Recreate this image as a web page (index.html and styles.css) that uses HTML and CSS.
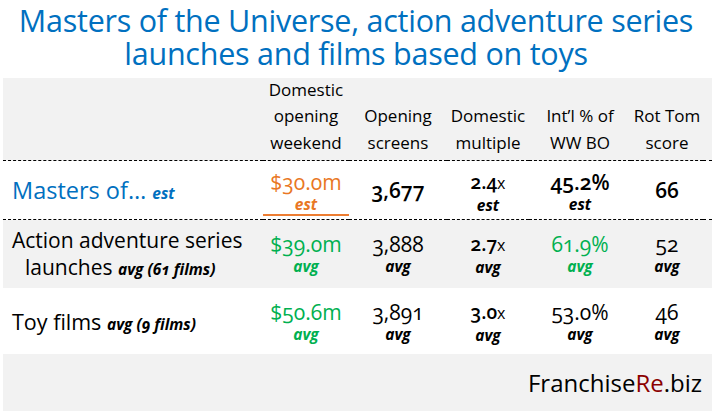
FILE: index.html
```html
<!DOCTYPE html>
<html>
<head>
<meta charset="utf-8">
<link rel="stylesheet" href="styles.css">
</head>
<body>
<div class="page">
  <h1 class="title">Masters of the Universe, action adventure series<br>launches and films based on toys</h1>
  <div class="panel">
    <div class="grid">
      <div class="hcell lab"></div>
      <div class="hcell">Domestic<br>opening<br>weekend</div>
      <div class="hcell">Opening<br>screens</div>
      <div class="hcell">Domestic<br>multiple</div>
      <div class="hcell">Int’l % of<br>WW BO</div>
      <div class="hcell">Rot Tom<br>score</div>
      <div class="hcell"></div>

      <div class="row r1">
        <div class="lab cell mlab">Masters of…&#160;<i class="note">est</i></div>
        <div class="cell orange"><span class="num">$30.0m</span><i class="note">est</i><span class="uline"></span></div>
        <div class="cell solo"><span class="num big">3,677</span></div>
        <div class="cell"><span class="num mult">2.4<small>x</small></span><i class="note">est</i></div>
        <div class="cell"><span class="num">45.2%</span><i class="note">est</i></div>
        <div class="cell solo"><span class="num big">66</span></div>
        <div class="cell"></div>
      </div>

      <div class="row r2">
        <div class="lab cell two"><span>Action adventure series</span><span class="ind">launches&#160;<i class="note">avg (61 films)</i></span></div>
        <div class="cell green"><span class="num">$39.0m</span><i class="note">avg</i></div>
        <div class="cell"><span class="num">3,888</span><i class="note">avg</i></div>
        <div class="cell"><span class="num mult">2.7<small>x</small></span><i class="note">avg</i></div>
        <div class="cell green"><span class="num">61.9%</span><i class="note">avg</i></div>
        <div class="cell"><span class="num">52</span><i class="note">avg</i></div>
        <div class="cell"></div>
      </div>

      <div class="row r3">
        <div class="lab cell">Toy films&#160;<i class="note">avg (9 films)</i></div>
        <div class="cell green"><span class="num">$50.6m</span><i class="note">avg</i></div>
        <div class="cell"><span class="num">3,891</span><i class="note">avg</i></div>
        <div class="cell"><span class="num mult">3.0<small>x</small></span><i class="note">avg</i></div>
        <div class="cell"><span class="num">53.0%</span><i class="note">avg</i></div>
        <div class="cell"><span class="num">46</span><i class="note">avg</i></div>
        <div class="cell"></div>
      </div>
    </div>
    <div class="footer">Franchise<span class="re">Re</span>.biz</div>
  </div>
</div>
</body>
</html>
```

FILE: styles.css
```css
html, body {
  margin: 0;
  padding: 0;
  background: #ffffff;
}
.page {
  width: 712px;
  height: 411px;
  overflow: hidden;
  font-family: "Open Sans", Lato, sans-serif;
  font-variant-numeric: oldstyle-nums;
  font-feature-settings: "onum" 1;
  color: #000;
}
.title {
  margin: 0;
  height: 78px;
  box-sizing: border-box;
  padding-top: 4px;
  text-align: center;
  color: #0070c0;
  font-weight: 500;
  font-size: 30.5px;
  line-height: 33px;
  letter-spacing: -0.25px;
  white-space: nowrap;
}
.panel {
  margin-left: 3px;
  background: #f2f2f2;
  height: 333px;
  display: flex;
  flex-direction: column;
}
.grid {
  display: grid;
  grid-template-columns: 260px 86px 98px 82px 102px 72px 1fr;
}
.hcell {
  height: 83px;
  box-sizing: border-box;
  padding-bottom: 4px;
  display: flex;
  align-items: flex-end;
  justify-content: center;
  text-align: center;
  font-size: 17px;
  line-height: 26.5px;
  border-bottom: 1px dashed #000;
  white-space: nowrap;
}
.row {
  display: contents;
}
.cell {
  display: flex;
  flex-direction: column;
  align-items: center;
  justify-content: flex-start;
  position: relative;
  box-sizing: border-box;
}
.r1 .cell {
  height: 59px;
  padding-top: 9px;
  background: #fff;
  border-bottom: 1px dashed #000;
}
.r1 .cell.solo {
  padding-top: 0;
  justify-content: center;
}
.r2 .cell {
  height: 68px;
  padding-top: 12px;
  background: #f2f2f2;
}
.r3 .cell {
  height: 66px;
  padding-top: 12px;
  background: #fff;
}
.lab.cell {
  padding: 0 0 0 9px;
  flex-direction: row;
  align-items: center;
  justify-content: flex-start;
  font-size: 21.5px;
  white-space: nowrap;
}
.lab.cell .note {
  margin-top: 5px;
}
.r1 .lab.cell {
  padding-top: 0;
}
.mlab {
  color: #0070c0;
  font-size: 23.5px !important;
}
.two {
  flex-direction: column !important;
  align-items: flex-start !important;
  justify-content: center !important;
  line-height: 27px;
  font-size: 21px !important;
}
.two .ind {
  padding-left: 13px;
}
.two .note {
  margin-top: 0 !important;
}
.num {
  font-size: 21px;
  line-height: 24px;
}
.num.big {
  font-size: 21px;
  font-weight: 600;
}
.num.mult {
  font-size: 19px;
  font-weight: 600;
}
.num.mult small {
  font-size: 16px;
  font-weight: normal;
}
.r1 .num {
  font-weight: 600;
}
.r1 .orange .num {
  font-weight: normal;
}
.note {
  font-size: 15.5px;
  line-height: 20px;
  font-weight: bold;
  font-style: italic;
}
.orange {
  color: #e97724;
}
.green {
  color: #00b050;
}
.uline {
  position: absolute;
  left: 0;
  right: 0;
  bottom: 3px;
  height: 2px;
  background: #ed7d31;
}
.footer {
  flex: 1;
  display: flex;
  align-items: center;
  justify-content: flex-end;
  padding-right: 10px;
  font-size: 24px;
}
.re {
  color: #8b0000;
}
```
